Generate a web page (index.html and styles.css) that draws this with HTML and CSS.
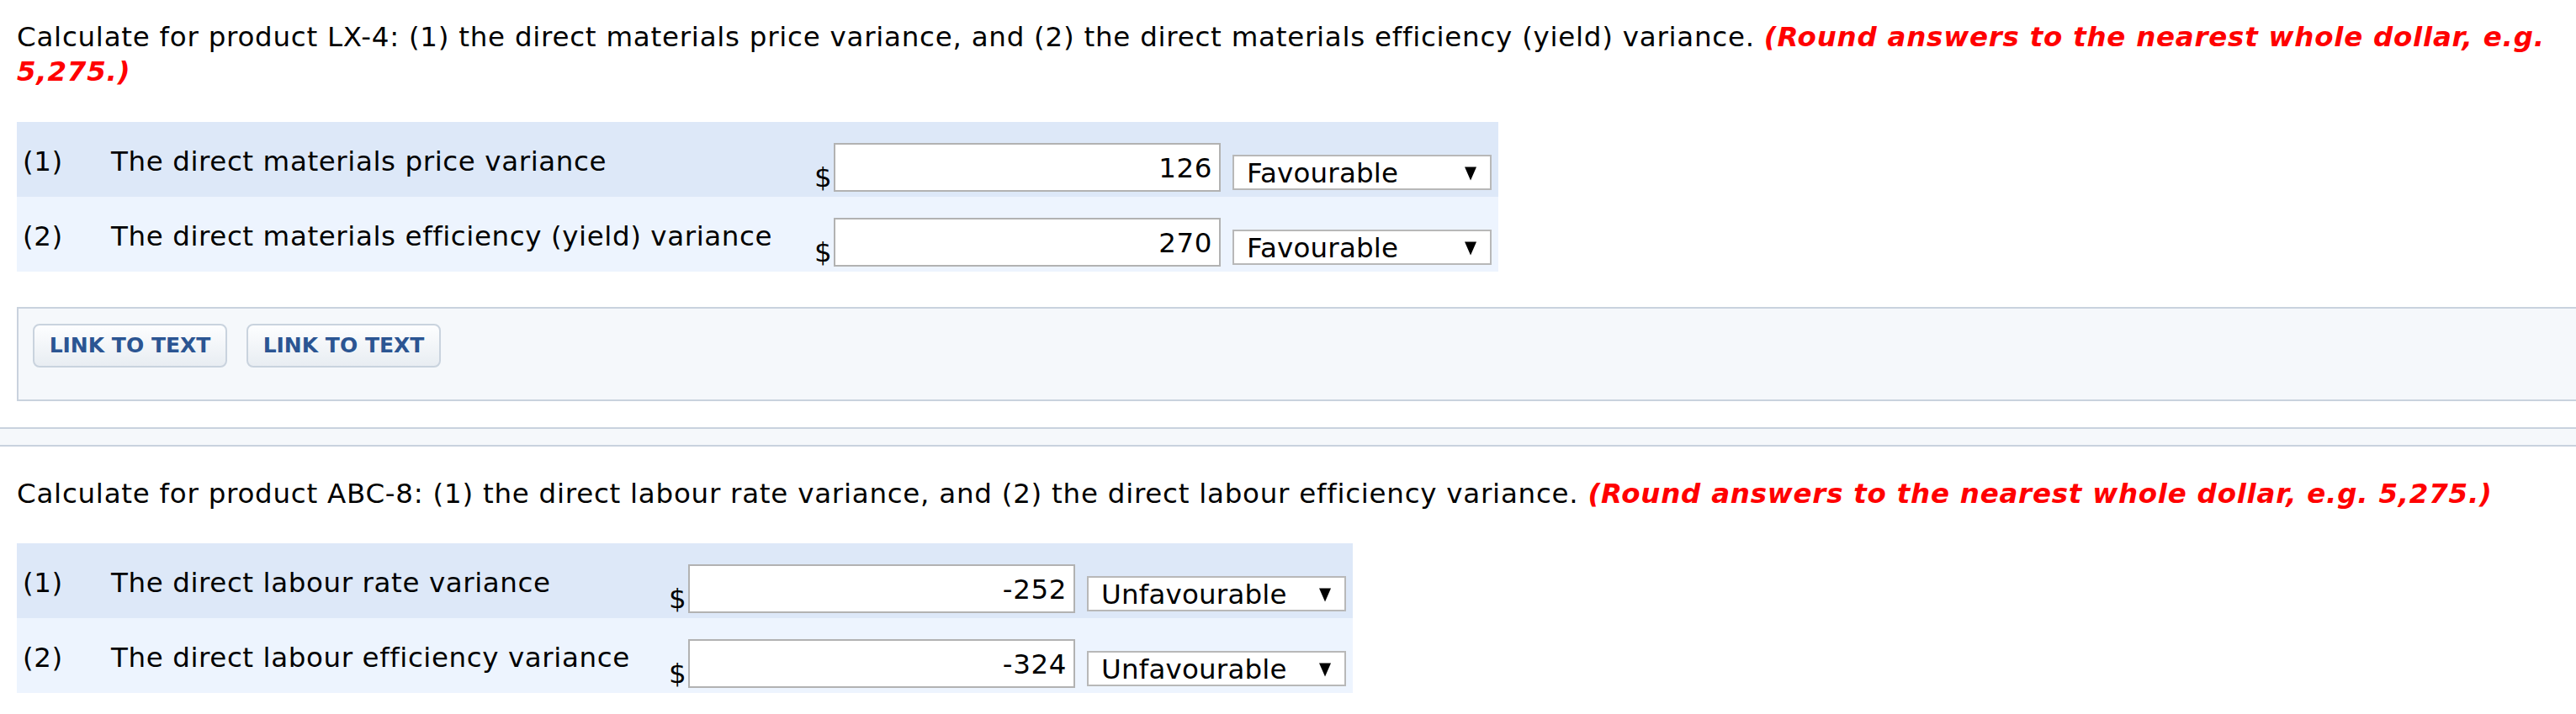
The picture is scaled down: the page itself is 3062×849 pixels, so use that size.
FILE: index.html
```html
<!DOCTYPE html>
<html lang="en">
<head>
<meta charset="utf-8">
<title>Variances</title>
<link rel="stylesheet" href="styles.css">
</head>
<body>
<div class="page">
  <p class="question">Calculate for product LX-4: (1) the direct materials price variance, and (2) the direct materials efficiency (yield) variance. <em class="hint">(Round answers to the nearest whole dollar, e.g. 5,275.)</em></p>

  <div class="answers answers-lx">
    <div class="row row-odd">
      <span class="num">(1)</span>
      <span class="label">The direct materials price variance</span>
      <span class="cur">$</span>
      <span class="field">126</span>
      <span class="select"><span>Favourable</span><svg class="arrow" viewBox="0 0 14 16"><polygon points="0,0 14,0 7,16"/></svg></span>
    </div>
    <div class="row row-even">
      <span class="num">(2)</span>
      <span class="label">The direct materials efficiency (yield) variance</span>
      <span class="cur">$</span>
      <span class="field">270</span>
      <span class="select"><span>Favourable</span><svg class="arrow" viewBox="0 0 14 16"><polygon points="0,0 14,0 7,16"/></svg></span>
    </div>
  </div>

  <div class="links">
    <span class="btn">LINK TO TEXT</span>
    <span class="btn">LINK TO TEXT</span>
  </div>

  <div class="divider"></div>

  <p class="question q2">Calculate for product ABC-8: (1) the direct labour rate variance, and (2) the direct labour efficiency variance. <em class="hint">(Round answers to the nearest whole dollar, e.g. 5,275.)</em></p>

  <div class="answers answers-abc">
    <div class="row row-odd">
      <span class="num">(1)</span>
      <span class="label">The direct labour rate variance</span>
      <span class="cur">$</span>
      <span class="field">-252</span>
      <span class="select"><span>Unfavourable</span><svg class="arrow" viewBox="0 0 14 16"><polygon points="0,0 14,0 7,16"/></svg></span>
    </div>
    <div class="row row-even">
      <span class="num">(2)</span>
      <span class="label">The direct labour efficiency variance</span>
      <span class="cur">$</span>
      <span class="field">-324</span>
      <span class="select"><span>Unfavourable</span><svg class="arrow" viewBox="0 0 14 16"><polygon points="0,0 14,0 7,16"/></svg></span>
    </div>
  </div>
</div>
</body>
</html>
```

FILE: styles.css
```css
html, body {
  margin: 0;
  padding: 0;
  background: #ffffff;
}

body {
  font-family: "DejaVu Sans", Verdana, sans-serif;
  font-size: 32.5px;
  line-height: 41px;
  letter-spacing: 0.6px;
  color: #000000;
}

.page {
  padding: 24px 20px 0 20px;
}

.question {
  margin: 0 -20px 0 0;
  letter-spacing: 0.75px;
}

.hint {
  color: #ff0000;
  font-weight: bold;
  font-style: italic;
}

.answers {
  margin-top: 39px;
  display: flex;
  flex-direction: column;
  width: max-content;
}

.row {
  display: grid;
  grid-template-columns: 112px 836px 23px 460px 322px;
  padding: 25px 8px 6px 0;
}

.answers-abc .row {
  grid-template-columns: 112px 663px 23px 460px 322px;
}

.row-odd {
  background: #dde8f8;
}

.row-even {
  background: #edf4fe;
}

.num {
  padding-left: 7px;
  align-self: start;
  padding-top: 2px;
}

.label {
  align-self: start;
  padding-top: 2px;
  white-space: nowrap;
}

.cur {
  align-self: end;
  margin-bottom: -4px;
  letter-spacing: 0;
}

.field {
  box-sizing: border-box;
  height: 58px;
  background: #ffffff;
  border: 2px solid #b2b2b2;
  text-align: right;
  padding: 8px 8px 0 0;
  line-height: 41px;
}

.select {
  box-sizing: border-box;
  align-self: end;
  margin-left: 14px;
  margin-bottom: 2px;
  width: 308px;
  height: 42px;
  background: #ffffff;
  border: 2px solid #b8b8b8;
  display: flex;
  align-items: center;
  justify-content: space-between;
  padding: 2px 16px 0 15px;
  line-height: 38px;
  letter-spacing: 0.2px;
}

.arrow {
  width: 14px;
  height: 17px;
  fill: #000000;
}

.links {
  box-sizing: border-box;
  margin-top: 42px;
  margin-right: -20px;
  height: 112px;
  border: 2px solid #c9d2de;
  border-right: none;
  background: #f5f8fb;
  padding: 18px 17px;
  display: flex;
  align-items: flex-start;
  gap: 23px;
}

.btn {
  box-sizing: border-box;
  height: 52px;
  width: 231px;
  border: 2px solid #c9d3de;
  border-radius: 8px;
  background: linear-gradient(#fdfeff, #e8edf2);
  color: #2b5592;
  font-weight: bold;
  font-size: 25px;
  letter-spacing: 0;
  display: flex;
  align-items: center;
  justify-content: center;
  line-height: 30px;
}

.divider {
  box-sizing: border-box;
  margin: 31px -20px 0 -20px;
  height: 23px;
  border-top: 2px solid #c9d2de;
  border-bottom: 2px solid #c9d2de;
  background: #f5f8fb;
}

.q2 {
  margin-top: 36px;
}

.answers-abc {
  margin-top: 38px;
}
```
